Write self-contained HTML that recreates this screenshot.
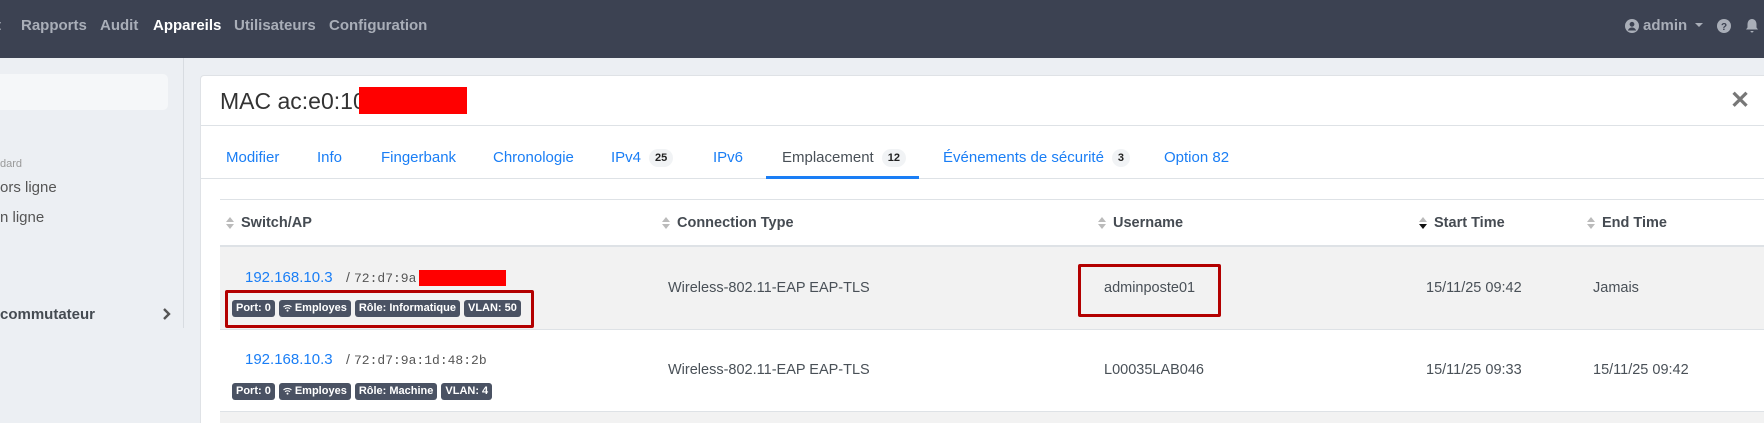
<!DOCTYPE html>
<html style="overflow:hidden;height:423px"><head><meta charset="utf-8"><style>
*{box-sizing:border-box;margin:0;padding:0}
body{width:1764px;height:423px;overflow:hidden;font-family:"Liberation Sans",sans-serif;background:#eceff3;position:relative;color:#495057}
.a{position:absolute;white-space:nowrap}
.nav{position:absolute;left:0;top:0;width:1764px;height:58px;background:#3c4252}
.nv{position:absolute;top:17px;font-size:15px;font-weight:bold;color:#a9aeb8}
.card{position:absolute;left:200px;top:75px;width:1564px;height:348px;background:#fff;border:1px solid #dfe2e6;border-right:none;border-bottom:none;border-radius:4px 0 0 0}
.tab{position:absolute;top:149px;font-size:15px;color:#1a7ef5}
.bd{display:inline-block;background:#f1f3f5;color:#222;font-size:11px;font-weight:bold;border-radius:10px;padding:3px 6px;margin-left:8px;vertical-align:1px}
.th{position:absolute;top:215px;font-size:14.5px;font-weight:bold;color:#454b52}
.si{position:absolute;top:215px;width:8px;height:16px}
.td{position:absolute;font-size:14.5px;color:#495057}
.ip{position:absolute;font-size:15px;color:#1a7ef5}
.sl{position:absolute;font-size:14px;color:#555}
.mac{position:absolute;font-family:"Liberation Mono",monospace;font-size:13px;color:#555}
.bg{display:inline-block;background:#4a5263;color:#fff;font-size:11px;font-weight:bold;border-radius:3px;padding:2px 4px;margin-right:4px;height:17px;line-height:13px}
.bg svg{vertical-align:-1px;margin-right:3px}
</style></head><body>
<div class="nav">
<div class="nv" style="left:-4px">t</div>
<div class="nv" style="left:21px">Rapports</div>
<div class="nv" style="left:100px">Audit</div>
<div class="nv" style="left:153px;color:#fff">Appareils</div>
<div class="nv" style="left:234px">Utilisateurs</div>
<div class="nv" style="left:329px">Configuration</div>
<svg class="a" style="left:1625px;top:19px" width="14" height="14" viewBox="0 0 14 14"><circle cx="7" cy="7" r="7" fill="#a9aeb8"/><circle cx="7" cy="5.3" r="2.4" fill="#3c4252"/><path d="M2.8 11.5c1-2.2 2.4-3 4.2-3s3.2.8 4.2 3" fill="#3c4252"/></svg>
<div class="nv" style="left:1643px">admin</div>
<div class="a" style="left:1695px;top:23px;border-left:4px solid transparent;border-right:4px solid transparent;border-top:4px solid #a9aeb8"></div>
<svg class="a" style="left:1717px;top:19px" width="14" height="14" viewBox="0 0 14 14"><circle cx="7" cy="7" r="7" fill="#a9aeb8"/><text x="7" y="11" font-size="10" font-weight="bold" text-anchor="middle" fill="#3c4252" font-family="Liberation Sans">?</text></svg>
<svg class="a" style="left:1745px;top:18px" width="14" height="16" viewBox="0 0 14 16"><path d="M7 1c3 0 4.5 2.5 4.5 5.5v3l1.5 2H1l1.5-2v-3C2.5 3.5 4 1 7 1z M5.5 13h3a1.5 1.5 0 0 1-3 0z" fill="#a9aeb8"/></svg>
</div>
<div class="a" style="left:0;top:74px;width:168px;height:36px;background:#f5f7f9;border-radius:0 5px 5px 0"></div>
<div class="a" style="left:183px;top:58px;width:1px;height:270px;background:#d8dce1"></div>
<div class="a" style="left:0;top:158px;font-size:11px;color:#999">dard</div>
<div class="a" style="left:0;top:179px;font-size:15px;color:#555">ors ligne</div>
<div class="a" style="left:0;top:209px;font-size:15px;color:#555">n ligne</div>
<div class="a" style="left:0;top:306px;font-size:15px;font-weight:bold;color:#454b52">commutateur</div>
<svg class="a" style="left:162px;top:307px" width="10" height="14" viewBox="0 0 10 14"><path d="M2 2l5 5-5 5" stroke="#555" stroke-width="2.4" fill="none"/></svg>

<div class="card"></div>
<div class="a" style="left:220px;top:88px;font-size:23px;color:#333">MAC ac:e0:10:</div>
<div class="a" style="left:359px;top:87px;width:108px;height:27px;background:#f00"></div>
<div class="a" style="left:1730px;top:86px;font-size:24px;font-weight:bold;color:#777">✕</div>
<div class="a" style="left:201px;top:125px;width:1563px;height:1px;background:#dee2e6"></div>
<div class="tab" style="left:226px">Modifier</div>
<div class="tab" style="left:317px">Info</div>
<div class="tab" style="left:381px">Fingerbank</div>
<div class="tab" style="left:493px">Chronologie</div>
<div class="tab" style="left:611px">IPv4<span class="bd">25</span></div>
<div class="tab" style="left:713px">IPv6</div>
<div class="tab" style="left:782px;color:#495057">Emplacement<span class="bd">12</span></div>
<div class="tab" style="left:943px">Événements de sécurité<span class="bd">3</span></div>
<div class="tab" style="left:1164px">Option 82</div>
<div class="a" style="left:201px;top:178px;width:1563px;height:1px;background:#dee2e6"></div>
<div class="a" style="left:766px;top:176px;width:153px;height:3px;background:#1a7ef5"></div>

<div class="a" style="left:220px;top:199px;width:1544px;height:1px;background:#dee2e6"></div>
<svg class="si" style="left:226px" viewBox="0 0 8 16"><path d="M0 7l4-5 4 5z M0 9l4 5 4-5z" fill="#bbb"/></svg>
<div class="th" style="left:241px">Switch/AP</div>
<svg class="si" style="left:662px" viewBox="0 0 8 16"><path d="M0 7l4-5 4 5z M0 9l4 5 4-5z" fill="#bbb"/></svg>
<div class="th" style="left:677px">Connection Type</div>
<svg class="si" style="left:1098px" viewBox="0 0 8 16"><path d="M0 7l4-5 4 5z M0 9l4 5 4-5z" fill="#bbb"/></svg>
<div class="th" style="left:1113px">Username</div>
<svg class="si" style="left:1419px" viewBox="0 0 8 16"><path d="M0 7l4-5 4 5z" fill="#bbb"/><path d="M0 9l4 5 4-5z" fill="#111"/></svg>
<div class="th" style="left:1434px">Start Time</div>
<svg class="si" style="left:1587px" viewBox="0 0 8 16"><path d="M0 7l4-5 4 5z M0 9l4 5 4-5z" fill="#bbb"/></svg>
<div class="th" style="left:1602px">End Time</div>
<div class="a" style="left:220px;top:245px;width:1544px;height:2px;background:#dee2e6"></div>

<div class="a" style="left:220px;top:247px;width:1544px;height:82px;background:#f2f2f2"></div>
<div class="a" style="left:220px;top:329px;width:1544px;height:1px;background:#dee2e6"></div>
<div class="ip" style="left:245px;top:269px">192.168.10.3</div>
<div class="sl" style="left:346px;top:269px">/</div>
<div class="mac" style="left:354px;top:271px">72:d7:9a:</div>
<div class="a" style="left:419px;top:270px;width:87px;height:16px;background:#f00"></div>
<div class="a" style="left:232px;top:298px"><span class="bg">Port: 0</span><span class="bg"><svg width="9" height="8" viewBox="0 0 9 8"><path d="M0.5 3a6 6 0 0 1 8 0M2 4.7a4 4 0 0 1 5 0" stroke="#fff" stroke-width="1.1" fill="none"/><circle cx="4.5" cy="6.6" r="1" fill="#fff"/></svg>Employes</span><span class="bg">Rôle: Informatique</span><span class="bg">VLAN: 50</span></div>
<div class="a" style="left:225px;top:290px;width:309px;height:38px;border:3px solid #b30000;border-radius:2px"></div>
<div class="td" style="left:668px;top:280px">Wireless-802.11-EAP EAP-TLS</div>
<div class="a" style="left:1078px;top:264px;width:143px;height:53px;border:3px solid #b30000;border-radius:2px"></div>
<div class="td" style="left:1104px;top:280px">adminposte01</div>
<div class="td" style="left:1426px;top:280px">15/11/25 09:42</div>
<div class="td" style="left:1593px;top:280px">Jamais</div>

<div class="ip" style="left:245px;top:351px">192.168.10.3</div>
<div class="sl" style="left:346px;top:351px">/</div>
<div class="mac" style="left:354px;top:353px">72:d7:9a:1d:48:2b</div>
<div class="a" style="left:232px;top:381px"><span class="bg">Port: 0</span><span class="bg"><svg width="9" height="8" viewBox="0 0 9 8"><path d="M0.5 3a6 6 0 0 1 8 0M2 4.7a4 4 0 0 1 5 0" stroke="#fff" stroke-width="1.1" fill="none"/><circle cx="4.5" cy="6.6" r="1" fill="#fff"/></svg>Employes</span><span class="bg">Rôle: Machine</span><span class="bg">VLAN: 4</span></div>
<div class="td" style="left:668px;top:362px">Wireless-802.11-EAP EAP-TLS</div>
<div class="td" style="left:1104px;top:362px">L00035LAB046</div>
<div class="td" style="left:1426px;top:362px">15/11/25 09:33</div>
<div class="td" style="left:1593px;top:362px">15/11/25 09:42</div>
<div class="a" style="left:220px;top:411px;width:1544px;height:1px;background:#dee2e6"></div>
<div class="a" style="left:220px;top:412px;width:1544px;height:11px;background:#f2f2f2"></div>
</body></html>
